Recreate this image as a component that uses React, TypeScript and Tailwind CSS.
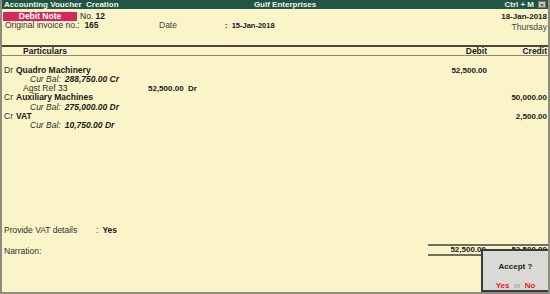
import React from "react";

const Row = ({ children, className = "" }: { children: React.ReactNode; className?: string }) => (
  <div className={`flex items-center h-[9.33px] leading-[9.33px] ${className}`}>{children}</div>
);

export default function App() {
  return (
    <div
      className="relative w-[550px] h-[294px] bg-[#faf4c8] text-[#1a1a1a] overflow-hidden flex flex-col border-l-2 border-r-2 border-b-2 border-[#8c8c80]"
      style={{ fontFamily: '"Liberation Sans", Arial, sans-serif' }}
    >
      {/* Title bar */}
      <div className="h-[9px] shrink-0 bg-[#1f5646] flex items-center text-[#f2f2e8] font-bold text-[8px] leading-[9px] pl-[2px] pr-[2px]">
        <div className="w-[200px]">Accounting Voucher&nbsp; Creation</div>
        <div className="flex-1 text-center pl-[20px]">Gulf Enterprises</div>
        <div className="w-[200px] flex justify-end items-center gap-[4px]">
          <span>Ctrl + M</span>
          <span className="w-[8px] h-[7px] bg-[#c8c8c0] border border-[#777] flex items-center justify-center text-[#333] text-[6px] leading-[6px]">×</span>
        </div>
      </div>

      {/* Header */}
      <div className="shrink-0 pt-[3px] text-[8.5px]">
        <div className="flex h-[9px] items-center">
          <div className="ml-[1px] w-[74px] h-[9px] bg-[#d9265a] text-white font-bold text-center leading-[9px]">Debit Note</div>
          <div className="ml-[3px]">No. <span className="font-bold">12</span></div>
          <div className="flex-1 text-right pr-[1px] font-bold text-[8px]">18-Jan-2018</div>
        </div>
        <div className="flex h-[10px] items-start">
          <div className="ml-[3px] w-[150px] leading-[9px] text-[#333]">
            Original invoice no.:&nbsp; <span className="font-bold text-[#1a1a1a]">165</span>
          </div>
          <div className="ml-[4px] w-[66px] leading-[9px] text-[#444]">Date</div>
          <div className="leading-[9px] font-bold text-[7.5px]">:&nbsp; 15-Jan-2018</div>
          <div className="flex-1 text-right pr-[1px] text-[#444] leading-[11px] mt-[1px]">Thursday</div>
        </div>
      </div>

      {/* Column header */}
      <div className="mt-[14px] shrink-0 border-t-2 border-b border-t-[#4a4a38] border-b-[#8a8a74] h-[11px] flex items-center font-bold text-[8.5px]">
        <div className="pl-[21px] flex-1">Particulars</div>
        <div className="w-[70px] text-right">Debit</div>
        <div className="w-[61px] text-right pr-[1px]">Credit</div>
      </div>

      {/* Entries */}
      <div className="flex-1 pt-[9.5px] text-[8.5px]">
        <Row>
          <span className="w-[14px] pl-[2px] text-[#333]">Dr</span>
          <span className="font-bold">Quadro Machinery</span>
          <span className="ml-auto w-[70px] text-right font-bold text-[8px] mr-[61px]">52,500.00</span>
        </Row>
        <Row className="pl-[28px] italic">
          <span className="text-[#333]">Cur Bal:</span>
          <span className="ml-[4px] font-bold">288,750.00 Cr</span>
        </Row>
        <Row className="pl-[21px]">
          <span className="w-[125px] text-[#333]">Agst Ref <span className="text-[#1a1a1a]">33</span></span>
          <span className="font-bold text-[8px]">52,500.00&nbsp; Dr</span>
        </Row>
        <Row>
          <span className="w-[14px] pl-[2px] text-[#333]">Cr</span>
          <span className="font-bold">Auxiliary Machines</span>
          <span className="ml-auto w-[61px] text-right font-bold text-[8px] pr-[1px]">50,000.00</span>
        </Row>
        <Row className="pl-[28px] italic">
          <span className="text-[#333]">Cur Bal:</span>
          <span className="ml-[4px] font-bold">275,000.00 Dr</span>
        </Row>
        <Row>
          <span className="w-[14px] pl-[2px] text-[#333]">Cr</span>
          <span className="font-bold">VAT</span>
          <span className="ml-auto w-[61px] text-right font-bold text-[8px] pr-[1px]">2,500.00</span>
        </Row>
        <Row className="pl-[28px] italic">
          <span className="text-[#333]">Cur Bal:</span>
          <span className="ml-[4px] font-bold">10,750.00 Dr</span>
        </Row>
      </div>

      {/* Bottom */}
      <div className="shrink-0 h-[67px] text-[8.5px]">
        <div className="flex items-center h-[10px] pl-[2px]">
          <span className="w-[92px] text-[#333]">Provide VAT details</span>
          <span className="text-[#333]">:</span>
          <span className="ml-[4px] font-bold">Yes</span>
        </div>
        <div className="flex mt-[9px]">
          <div className="flex-1 pl-[2px] text-[#333] leading-[12px] mt-[1px]">Narration:</div>
          <div className="w-[120px] border-t-2 border-b-2 border-[#6e6e5c] h-[12px] flex items-center font-bold text-[8px]">
            <span className="w-[58px] text-right">52,500.00</span>
            <span className="flex-1 text-right pr-[1px]">52,500.00</span>
          </div>
        </div>
      </div>

      {/* Accept popup */}
      <div className="absolute right-[-2px] bottom-[0px] w-[69px] h-[43px] bg-[#d9d9d6] border-2 border-[#3a3a3a] flex flex-col items-center text-[8px] font-bold leading-[9px]">
        <div className="mt-[11px] text-[#222]">Accept ?</div>
        <div className="mt-[10px]">
          <span className="text-[#e8201c]">Yes</span>
          <span className="text-[#9a9a9a] font-normal mx-[4px]">or</span>
          <span className="text-[#e8201c]">No</span>
        </div>
      </div>
    </div>
  );
}
